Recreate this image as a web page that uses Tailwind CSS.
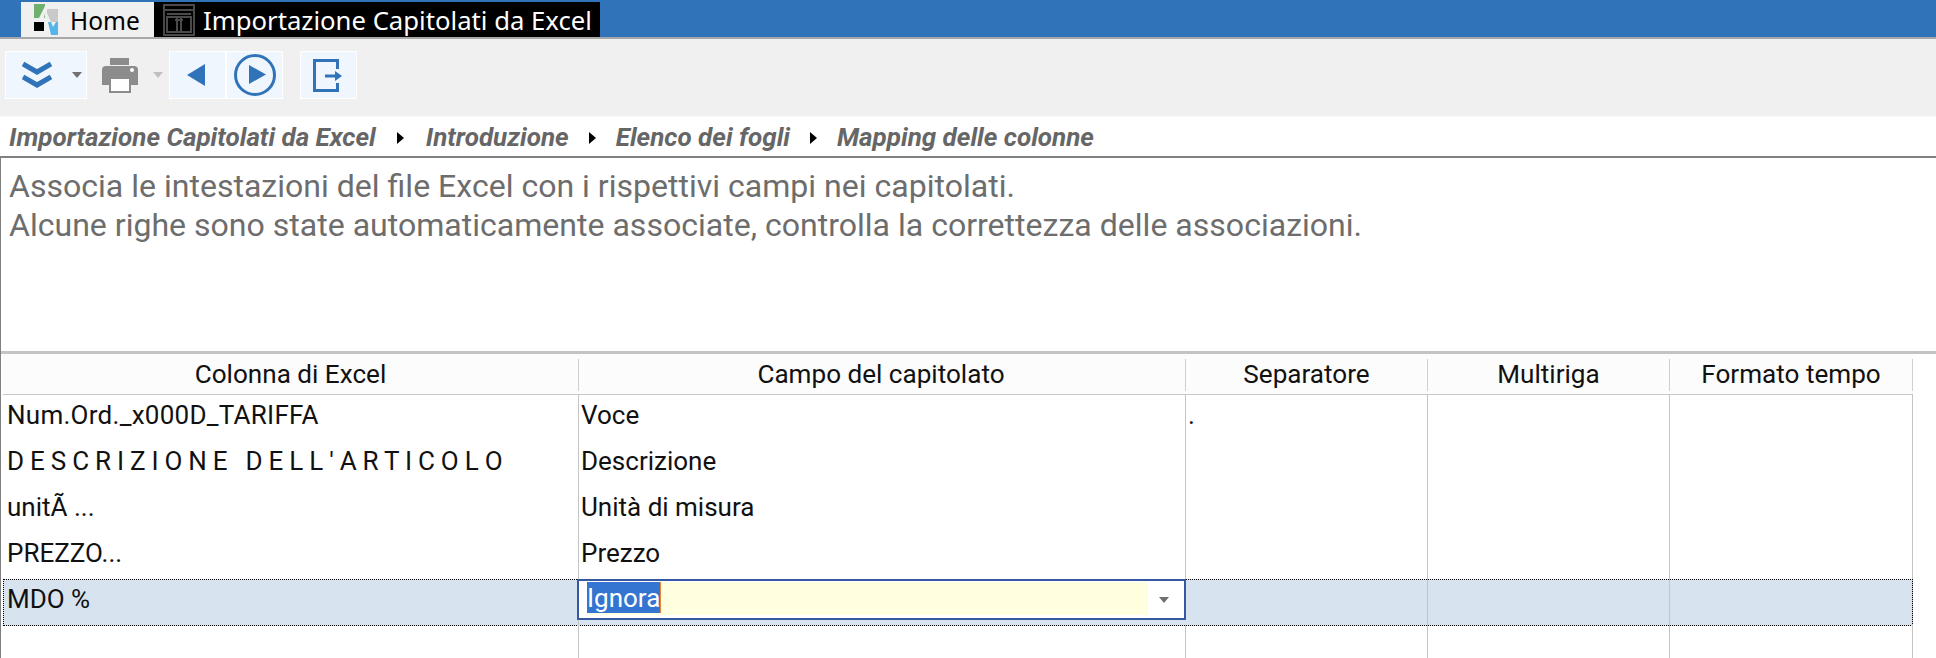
<!DOCTYPE html>
<html lang="it">
<head>
<meta charset="utf-8">
<title>Importazione Capitolati da Excel</title>
<script src="https://cdn.jsdelivr.net/npm/@tailwindcss/browser@4"></script>
</head>
<body class="bg-white overflow-hidden font-['Roboto',sans-serif]">
<div class="w-[1936px] h-[658px] overflow-hidden flex flex-col">
  <!-- title tabs -->
  <div class="h-[37px] bg-[#3173b9] pl-[21px] pt-[2px] flex shrink-0">
    <div class="w-[133px] h-[35px] bg-[#f0f0f0] flex items-center pl-[13px] gap-[12px] text-black text-[24.5px] font-['Noto_Sans',sans-serif]">
      <svg class="w-[24px] h-[31px] shrink-0" viewBox="0 0 24 31">
        <path d="M0 0H11V2L5 14H0Z" fill="#6fb06f"/>
        <path d="M10 14L11 9V14Z" fill="#6fb06f"/>
        <path d="M13 5H24V18H17L13 9Z" fill="#c9c9c9"/>
        <path d="M0 18H10V27H0Z" fill="#000"/>
        <path d="M14 18H17L19 23L22 18H24V31H17Z" fill="#54b5e8"/>
      </svg>
      <span class="pt-[4px]">Home</span>
    </div>
    <div class="w-[446px] h-[35px] bg-black flex items-center pl-[9px] gap-[8px] text-white text-[25.7px] font-['Noto_Sans',sans-serif]">
      <svg class="w-[32px] h-[32px] shrink-0" viewBox="0 0 32 32" fill="none" stroke="#4a4a4a" stroke-width="2">
        <rect x="1" y="1" width="30" height="30"/>
        <path d="M1 6H31M4 10H28"/>
        <rect x="4" y="13" width="24" height="15"/>
        <path d="M14 13V28M18 13V28" stroke-width="2"/>
        <path d="M12 16H20" stroke-width="2"/>
      </svg>
      <span class="pt-[3px]">Importazione Capitolati da Excel</span>
    </div>
  </div>
  <div class="h-[2px] bg-[#a8a8a8] shrink-0"></div>
  <!-- toolbar -->
  <div class="h-[78px] bg-[#f0f0f0] shrink-0 flex items-start pl-[5px] pt-[12px] border-b border-[#f8f8f8]">
    <div class="w-[82px] h-[48px] bg-[#eff6fd] border border-white flex items-center pl-[16px]">
      <svg class="w-[30px] h-[28px]" viewBox="0 0 30 28" fill="none" stroke="#3173b9" stroke-width="5"><path d="M1 3L15 11L29 3M1 16L15 24L29 16"/></svg>
      <svg class="w-[10px] h-[6px] ml-[20px]" viewBox="0 0 10 6"><path d="M0 0H10L5 6Z" fill="#707070"/></svg>
    </div>
    <div class="w-[82px] h-[48px] flex items-center pl-[15px]">
      <svg class="w-[36px] h-[35px]" viewBox="0 0 36 35">
        <path d="M8 0H27V7H8Z" fill="#8c8c8c"/>
        <path d="M4 8H32Q36 8 36 12V27H29V19H7V27H0V12Q0 8 4 8Z" fill="#8c8c8c"/>
        <circle cx="30" cy="12" r="2" fill="#fff"/>
        <path d="M8 20H28V34H8Z" fill="#fff" stroke="#8c8c8c" stroke-width="2"/>
      </svg>
      <svg class="w-[10px] h-[6px] ml-[15px]" viewBox="0 0 10 6"><path d="M0 0H10L5 6Z" fill="#c0c0c0"/></svg>
    </div>
    <div class="w-[57px] h-[48px] bg-[#eff6fd] border border-white flex items-center pl-[17px]">
      <svg class="w-[18px] h-[22px]" viewBox="0 0 18 22"><path d="M18 0V22L0 11Z" fill="#3173b9"/></svg>
    </div>
    <div class="w-[57px] h-[48px] bg-[#eff6fd] border border-white flex items-center justify-center">
      <svg class="w-[42px] h-[42px] shrink-0" viewBox="0 0 42 42" fill="none"><circle cx="21" cy="21" r="19.5" stroke="#3173b9" stroke-width="3"/><path d="M15 11V30L32 20.5Z" fill="#3173b9"/></svg>
    </div>
    <div class="w-[57px] h-[48px] bg-[#eff6fd] border border-white ml-[17px] flex items-center pl-[12px]">
      <svg class="w-[29px] h-[33px]" viewBox="0 0 29 33" fill="none" stroke="#3173b9" stroke-width="3"><path d="M24.5 10V1.5H1.5V31.5H24.5V24"/><path d="M12 17H24"/><path d="M22 12L29 17L22 22Z" fill="#3173b9" stroke="none"/></svg>
    </div>
  </div>
  <!-- breadcrumb -->
  <div class="h-[41px] shrink-0 flex items-center pl-[9px] pt-[2px] italic font-bold text-[#666666] text-[26px] border-b-2 border-[#808080]">
    <span>Importazione Capitolati da Excel</span>
    <svg class="w-[7px] h-[12px] ml-[21px] mr-[22px]" viewBox="0 0 7 12"><path d="M0 0L7 6L0 12Z" fill="#000"/></svg>
    <span>Introduzione</span>
    <svg class="w-[7px] h-[12px] mx-[20px]" viewBox="0 0 7 12"><path d="M0 0L7 6L0 12Z" fill="#000"/></svg>
    <span>Elenco dei fogli</span>
    <svg class="w-[7px] h-[12px] mx-[20px]" viewBox="0 0 7 12"><path d="M0 0L7 6L0 12Z" fill="#000"/></svg>
    <span>Mapping delle colonne</span>
  </div>
  <!-- description and table -->
  <div class="flex-1 border-l border-[#808080] flex flex-col min-h-0">
    <div class="h-[193px] shrink-0 pl-[8px] pt-[9px] text-[#6d6d6d] text-[32.05px] leading-[39px]">
      <p>Associa le intestazioni del file Excel con i rispettivi campi nei capitolati.</p>
      <p>Alcune righe sono state automaticamente associate, controlla la correttezza delle associazioni.</p>
    </div>
    <div class="h-[3px] bg-[#c4c4c4] shrink-0"></div>
    <!-- header -->
    <div class="h-[41px] w-[1910px] ml-[2px] shrink-0 bg-[#fcfcfc] grid grid-cols-[576px_607px_242px_242px_243px] items-start pt-[5px] text-[#111] text-[26.1px] text-center border-b border-[#c8c8c8]">
      <div class="h-[32px] border-r border-[#d0d0d0] leading-[30px]">Colonna di Excel</div>
      <div class="h-[32px] border-r border-[#d0d0d0] leading-[30px] pr-[2px]">Campo del capitolato</div>
      <div class="h-[32px] border-r border-[#d0d0d0] leading-[30px]">Separatore</div>
      <div class="h-[32px] border-r border-[#d0d0d0] leading-[30px]">Multiriga</div>
      <div class="h-[32px] border-r border-[#d0d0d0] leading-[30px]">Formato tempo</div>
    </div>
    <!-- rows -->
    <div class="flex-1 w-[1910px] ml-[2px] grid grid-cols-[576px_607px_242px_242px_243px] auto-rows-[46px] text-[#111] text-[26px] leading-[40px]">
      <div class="border-r border-[#c4c4c4] pl-[4px] tracking-[0.27px]">Num.Ord._x000D_TARIFFA</div>
      <div class="border-r border-[#c4c4c4] pl-[2px]">Voce</div>
      <div class="border-r border-[#c4c4c4] pl-[2px]">.</div>
      <div class="border-r border-[#c4c4c4]"></div>
      <div class="border-r border-[#c4c4c4]"></div>

      <div class="border-r border-[#c4c4c4] pl-[4px] [word-spacing:-0.5px]">D E S C R I Z I O N E &nbsp;&nbsp;D E L L ' A R T I C O L O</div>
      <div class="border-r border-[#c4c4c4] pl-[2px]">Descrizione</div>
      <div class="border-r border-[#c4c4c4]"></div>
      <div class="border-r border-[#c4c4c4]"></div>
      <div class="border-r border-[#c4c4c4]"></div>

      <div class="border-r border-[#c4c4c4] pl-[4px]">unitÃ ...</div>
      <div class="border-r border-[#c4c4c4] pl-[2px]">Unità di misura</div>
      <div class="border-r border-[#c4c4c4]"></div>
      <div class="border-r border-[#c4c4c4]"></div>
      <div class="border-r border-[#c4c4c4]"></div>

      <div class="border-r border-[#c4c4c4] pl-[4px]">PREZZO...</div>
      <div class="border-r border-[#c4c4c4] pl-[2px]">Prezzo</div>
      <div class="border-r border-[#c4c4c4]"></div>
      <div class="border-r border-[#c4c4c4]"></div>
      <div class="border-r border-[#c4c4c4]"></div>

      <div class="col-span-5 grid grid-cols-[576px_607px_242px_242px_243px] h-[47px] bg-[#d7e4ef] outline-1 outline-dotted -outline-offset-1 outline-black">
        <div class="border-r border-[#c4c4c4] pl-[4px]">MDO %</div>
        <div class="-ml-[2px] h-[41px] w-[609px] bg-white border-2 border-[#3558a0] flex items-start pl-[8px] pt-[1px] relative z-10">
          <div class="w-[561px] h-[33px] bg-[#ffffe0] flex items-start">
            <span class="bg-[#3375d0] text-white h-[31px] leading-[32px] border-r border-[#e8883a]">Ignora</span>
          </div>
          <svg class="w-[10px] h-[6px] ml-[11px] mt-[15px]" viewBox="0 0 10 6"><path d="M0 0H10L5 6Z" fill="#707070"/></svg>
        </div>
        <div class="border-r border-[#c4c4c4]"></div>
        <div class="border-r border-[#c4c4c4]"></div>
        <div class="border-r border-[#c4c4c4]"></div>
      </div>

      <div class="border-r border-[#c4c4c4]"></div>
      <div class="border-r border-[#c4c4c4]"></div>
      <div class="border-r border-[#c4c4c4]"></div>
      <div class="border-r border-[#c4c4c4]"></div>
      <div class="border-r border-[#c4c4c4]"></div>
    </div>
  </div>
</div>
</body>
</html>
